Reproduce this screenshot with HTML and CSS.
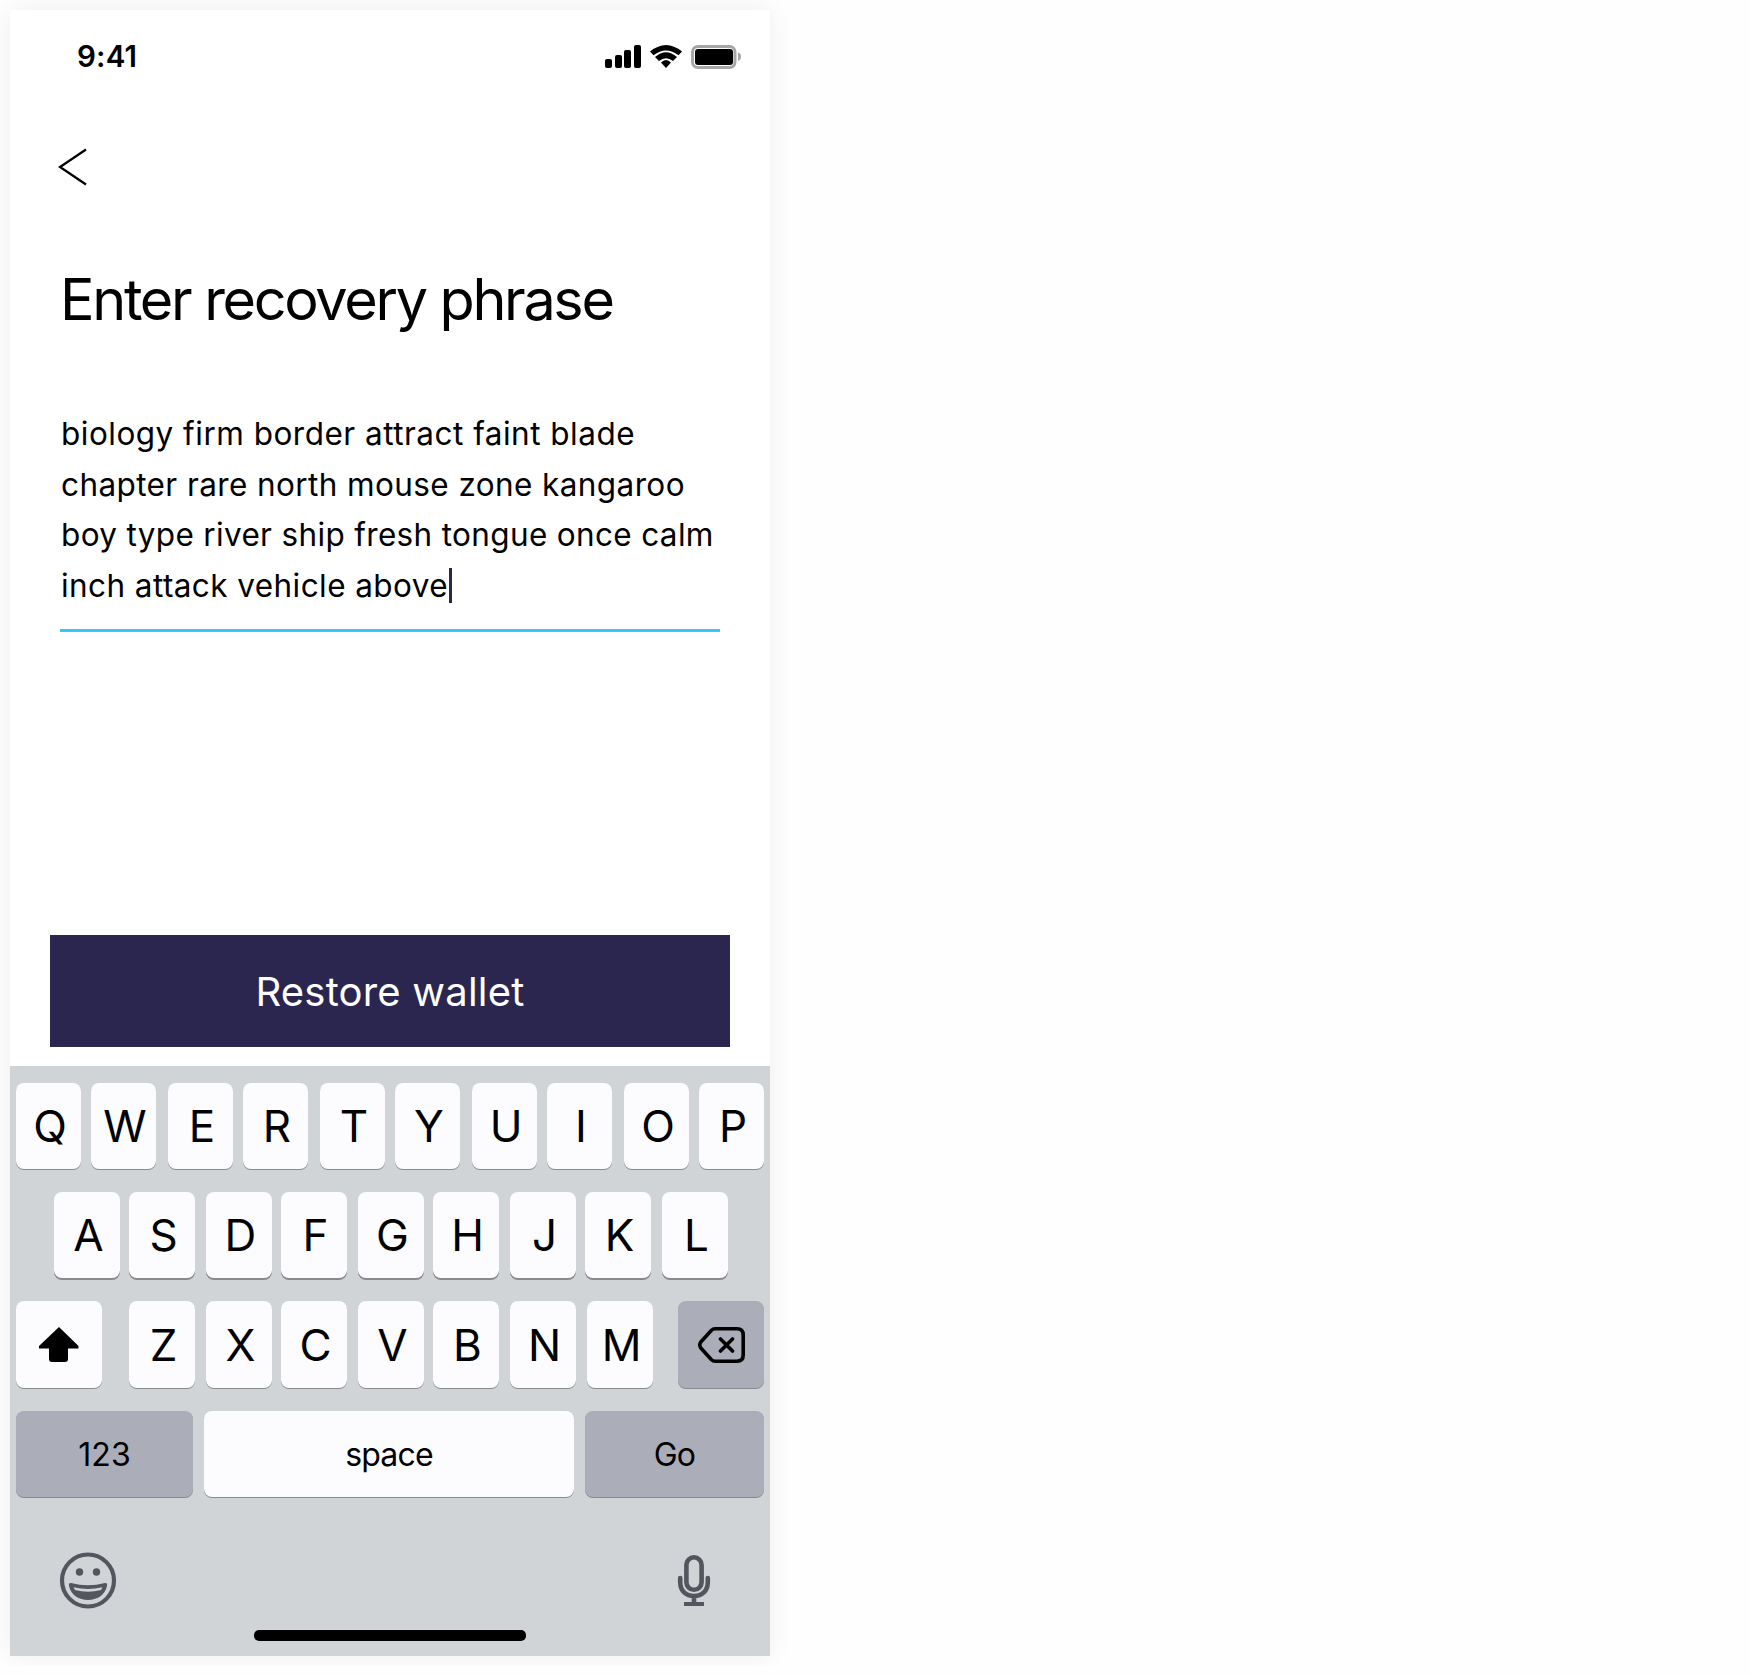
FILE: index.html
```
<!DOCTYPE html>
<html lang="en">
<head>
<meta charset="utf-8">
<title>Enter recovery phrase</title>
<link rel="stylesheet" href="styles.css">
</head>
<body>
<main class="phone">
  <header class="status">
    <span class="time">9:41</span>
    <svg class="status-icons" width="137" height="26" viewBox="604 44 137 26">
      <rect x="605" y="59" width="7" height="9" rx="2"/>
      <rect x="615" y="55" width="7" height="13" rx="2"/>
      <rect x="624" y="50" width="7" height="18" rx="2"/>
      <rect x="634" y="45" width="7" height="23" rx="2"/>
      <path d="M650 51.500Q666 38.500 682 51.500L678.500 55.200Q666 45.800 653.500 55.200Z"/>
      <path d="M655 57Q666 47.500 677 57L673 61Q666 55.500 659 61Z"/>
      <path d="M661 62.500Q666 57.500 671 62.500L666 68Z"/>
      <rect x="692.500" y="46.500" width="42.500" height="21" rx="5.500" fill="none" stroke="#a6a6a6" stroke-width="3"/>
      <rect x="695" y="49" width="38" height="16" rx="3"/>
      <path d="M738 52.500Q741 53 741 56.500T738 61Z" fill="#a6a6a6"/>
    </svg>
  </header>
  <button class="back" aria-label="Back"><svg width="30" height="38" viewBox="58 148 30 38"><path d="M86 149.500L60 167L86 184.500" fill="none" stroke="#000" stroke-width="2.300"/></svg></button>
  <h1 class="title">Enter recovery phrase</h1>
  <div class="phrase">
    <div class="line first">biology firm border attract faint blade</div>
    <div class="line second">chapter rare north mouse zone kangaroo</div>
    <div class="line third">boy type river ship fresh tongue once calm</div>
    <div class="line fourth">inch attack vehicle above<i class="caret"></i></div>
  </div>
  <button class="restore">Restore wallet</button>
  <section class="keyboard">
    <div class="row top"><b class="key">Q</b><b class="key">W</b><b class="key">E</b><b class="key">R</b><b class="key">T</b><b class="key">Y</b><b class="key">U</b><b class="key">I</b><b class="key">O</b><b class="key">P</b></div>
    <div class="row home"><b class="key">A</b><b class="key">S</b><b class="key">D</b><b class="key">F</b><b class="key">G</b><b class="key">H</b><b class="key">J</b><b class="key">K</b><b class="key">L</b></div>
    <div class="row lower">
      <b class="key mod"><svg width="40" height="36" viewBox="39 1325 40 36"><path d="M59 1325L78.500 1344V1346.500H68V1357Q68 1360 65 1360H52Q49 1360 49 1357V1346.500H39V1344Z"/></svg></b>
      <div class="letters"><b class="key">Z</b><b class="key">X</b><b class="key">C</b><b class="key">V</b><b class="key">B</b><b class="key">N</b><b class="key">M</b></div>
      <b class="key mod grey erase"><svg width="48" height="36" viewBox="698 1326 48 36" fill="none" stroke="#000" stroke-width="3.600" stroke-linecap="round" stroke-linejoin="round"><path d="M715 1327.800H737Q743.200 1327.800 743.200 1334V1354Q743.200 1360.200 737 1360.200H715Q713 1360.200 711.500 1358.700L700.800 1347Q698.800 1344 700.800 1341L711.500 1329.300Q713 1327.800 715 1327.800ZM720.500 1338L732.500 1350M732.500 1338L720.500 1350"/></svg></b>
    </div>
    <div class="row bottom"><b class="key grey num">123</b><b class="key space">space</b><b class="key grey go">Go</b></div>
    <div class="tools">
      <svg width="58" height="58" viewBox="59 1551 58 58"><circle cx="88" cy="1579.500" r="26" fill="none" stroke="#53565d" stroke-width="4.200"/><circle cx="79.500" cy="1571" r="3.700" fill="#53565d"/><circle cx="96.500" cy="1571" r="3.700" fill="#53565d"/><path d="M71 1582Q88 1586.500 105 1582Q107.500 1581.500 107 1585C105 1594 97 1599 88 1599S71 1594 69 1585Q68.500 1581.500 71 1582Z" fill="#53565d"/><path d="M73.500 1586.200Q88 1589.800 102.500 1586.200L101 1589Q88 1592.500 75 1589Z" fill="#d0d4d7"/></svg>
      <svg width="34" height="54" viewBox="677 1553 34 54" fill="none" stroke="#53565d" stroke-width="4.600" stroke-linecap="round"><rect x="686.400" y="1556.300" width="15.200" height="32.500" rx="7.600"/><path d="M680.200 1577V1581C680.200 1590 686 1595 694 1595S707.800 1590 707.800 1581V1577M694 1595V1602"/><path d="M684 1603H704" stroke-linecap="butt" stroke-width="4"/></svg>
    </div>
    <div class="indicator"></div>
  </section>
</main>
</body>
</html>
```
FILE: styles.css
```
* { box-sizing: border-box; }
body { margin: 0; padding: 10px; background: #fefefe; font-family: Inter, "Liberation Sans", sans-serif; color: #000; }
button { border: 0; padding: 0; background: none; font: inherit; color: inherit; }
svg { display: block; }
.phone { width: 760px; height: 1646px; background: #fff; display: flex; flex-direction: column; box-shadow: 0 0 24px rgba(0, 0, 0, .065); }
.status { height: 94px; padding: 34px 29px 0 67px; display: flex; justify-content: space-between; align-items: flex-start; }
.time { font-size: 29.500px; font-weight: 600; line-height: 25px; letter-spacing: .2px; }
.back { width: 30px; height: 38px; margin: 44px 0 0 48px; }
.title { margin: 73px 0 0 50px; height: 80px; font-size: 57.500px; line-height: 80px; font-weight: 400; letter-spacing: -2.320px; white-space: nowrap; }
.phrase { margin: 69px 50px 0; height: 224px; padding-top: 1px; border-bottom: 3px solid #32c8ff; font-size: 31.500px; white-space: nowrap; }
.line { height: 50.670px; line-height: 50.670px; display: flex; align-items: center; padding-left: 1px; }
.first { letter-spacing: .490px; }
.second { letter-spacing: .400px; }
.third { letter-spacing: .340px; }
.fourth { letter-spacing: .420px; }
.caret { width: 3px; height: 35px; margin: 0 0 2px 1px; background: #2a2650; }
.restore { width: 680px; height: 112px; margin: 303px 40px 19px; padding-top: 2px; background: #2a2650; color: #fff; font-size: 40px; letter-spacing: .200px; }
.keyboard { height: 591px; background: #d0d4d7; padding: 17px 6px 0; }
.row { display: flex; height: 86px; }
.key { width: 65px; height: 86px; border-radius: 8px; background: #fcfcfe; box-shadow: 0 1px 0 #898a8d; font-size: 44px; font-weight: 400; display: flex; align-items: center; justify-content: center; padding-left: 3px; margin-right: 10px; flex: none; }
.top .key:nth-child(even) { margin-right: 12px; }
.home, .lower { margin-top: 23px; }
.home { padding-left: 38px; }
.home .key, .letters .key { width: 66px; margin-right: 9px; }
.home .key { box-shadow: 0 2px 0 #898a8d; padding-top: 1px; }
.lower .key { height: 87px; padding-top: 1px; }
.home .key:nth-child(even), .letters .key:nth-child(odd), .letters .key:nth-child(6) { margin-right: 11px; }
.letters { display: flex; padding-left: 27px; width: 576px; }
.row .mod { width: 86px; padding-left: 0; margin: 0; }
.row .erase { padding-left: 2px; }
.row .grey { background: #abadb9; }
.bottom { margin-top: 24px; gap: 11px; }
.bottom .key { font-size: 32px; margin: 0; padding: 2px 0 0; }
.bottom .num { width: 177px; }
.bottom .space { width: 370px; letter-spacing: -.800px; }
.bottom .go { width: 179px; letter-spacing: -.800px; }
.tools { display: flex; justify-content: space-between; align-items: center; margin-top: 55px; padding: 0 53px 0 43px; height: 58px; }
.indicator { width: 272px; height: 11px; border-radius: 5px; background: #000; margin: 20px auto 0; }
```
